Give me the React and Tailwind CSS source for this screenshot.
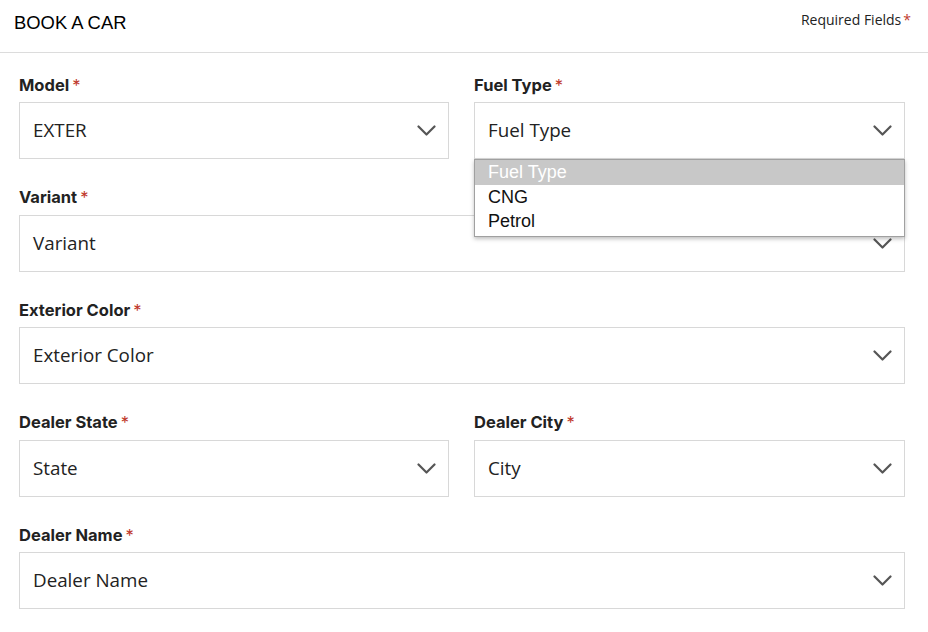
import React from "react";

const Chevron = () => (
  <svg width="19" height="11" viewBox="0 0 19 11" className="shrink-0">
    <path d="M1.5 1.5 L9.5 9.5 L17.5 1.5" fill="none" stroke="#555" strokeWidth="2.2" strokeLinecap="round" strokeLinejoin="round" />
  </svg>
);

const Field = ({ label, value, span, children }) => (
  <div className={`relative flex flex-col ${span ? "col-span-2" : ""}`}>
    <div className="h-[22px] mb-[6px] flex items-center text-[16.5px] font-bold text-[#222] leading-none" style={{ fontFamily: "Inter, sans-serif" }}>
      {label}
      <span className="text-[#c0392b] ml-[3px] font-normal">*</span>
    </div>
    <div className="h-[57px] border border-[#d8d8d8] bg-white flex items-center justify-between pl-[13px] pr-[12px]">
      <span className="text-[18.8px] text-[#222]" style={{ fontFamily: "'Open Sans', sans-serif" }}>{value}</span>
      <Chevron />
    </div>
    {children}
  </div>
);

export default function App() {
  return (
    <div className="w-[928px] h-[632px] bg-white overflow-hidden">
      <div className="h-[53px] border-b border-[#dcdcdc] flex items-start justify-between pl-[14px] pr-[17px]">
        <div className="mt-[12px] text-[18.4px] text-black leading-[22px]" style={{ fontFamily: "'Liberation Sans', Arial, sans-serif" }}>
          BOOK A CAR
        </div>
        <div className="mt-[11px] text-[14px] text-[#222] leading-[18px]" style={{ fontFamily: "'Open Sans', sans-serif" }}>
          Required Fields<span className="text-[#c0392b] ml-[2px]">*</span>
        </div>
      </div>
      <div className="grid grid-cols-[430px_431px] gap-x-[25px] gap-y-[27.5px] pl-[19px] pr-[23px] pt-[21px]">
        <Field label="Model" value="EXTER" />
        <Field label="Fuel Type" value="Fuel Type">
          <div className="absolute left-0 right-0 top-[85px] z-10 bg-white border border-[#a0a0a0] shadow-[0_2px_4px_rgba(0,0,0,0.25)] text-[18px] leading-[24.5px]" style={{ fontFamily: "'Liberation Sans', Arial, sans-serif" }}>
            <div className="bg-[#c8c8c8] text-white pl-[13px]">Fuel Type</div>
            <div className="text-[#111] pl-[13px]">CNG</div>
            <div className="text-[#111] pl-[13px] pb-[2px]">Petrol</div>
          </div>
        </Field>
        <Field label="Variant" value="Variant" span />
        <Field label="Exterior Color" value="Exterior Color" span />
        <Field label="Dealer State" value="State" />
        <Field label="Dealer City" value="City" />
        <Field label="Dealer Name" value="Dealer Name" span />
      </div>
    </div>
  );
}
